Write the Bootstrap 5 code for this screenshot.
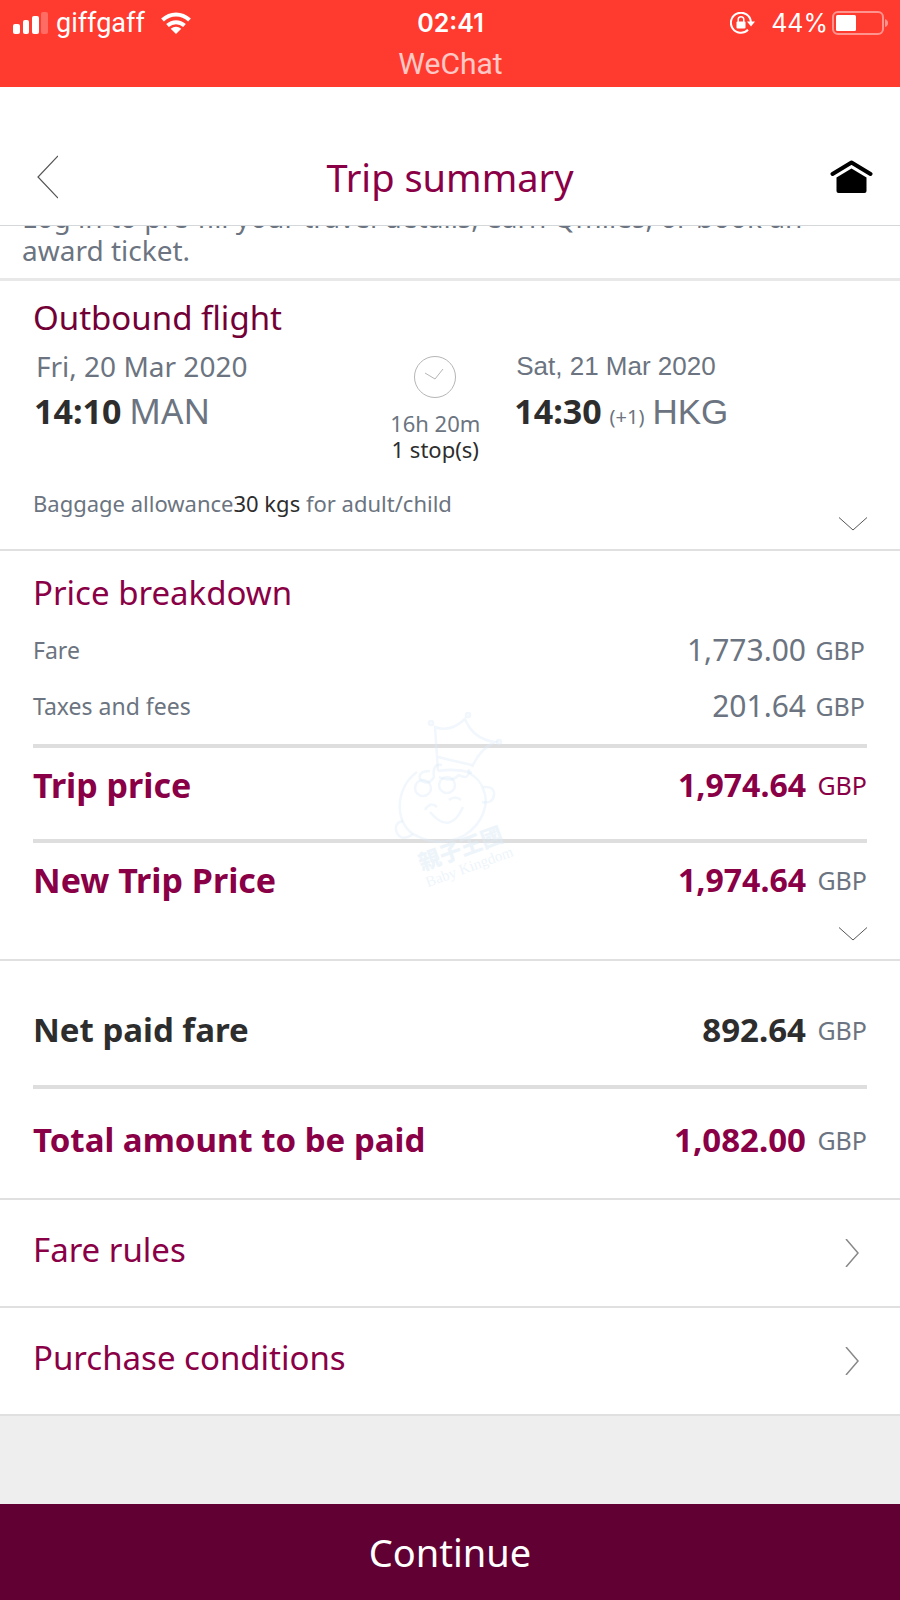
<!DOCTYPE html>
<html lang="en">
<head>
<meta charset="utf-8">
<meta name="viewport" content="width=device-width, initial-scale=1">
<title>Trip summary</title>
<link href="https://cdn.jsdelivr.net/npm/bootstrap@5.3.0/dist/css/bootstrap.min.css" rel="stylesheet">
<style>
  :root { --burgundy: #8a0046; --slate: #6b7480; --ink: #2d2d2d; --hair: #e0e0e0; }
  body { font-family: "Noto Sans", sans-serif; color: var(--slate); font-size: 22px; line-height: 26px; background: #eee; }
  svg { display: block; }
  .ink { color: var(--ink); }
  .burgundy { color: var(--burgundy); }

  .status { background: #ff3b30; color: #fff; font-family: Inter, sans-serif; font-size: 25px; line-height: 40px; min-height: 87px; padding: 3px 12px 0 13px; }
  .status-grid { display: grid; grid-template-columns: 1fr auto 1fr; }
  .carrier { font-family: Roboto, sans-serif; font-size: 27px; }
  .caller { font-family: Roboto, sans-serif; font-size: 30px; line-height: 42px; opacity: .72; }

  .topbar { padding: 41px 27px 0; min-height: 139px; border-bottom: 1px solid #d5d8da; display: grid; grid-template-columns: 1fr auto 1fr; }
  .topbar h1 { font-size: 38px; line-height: 50px; }
  .icon-btn { border: 0; background: none; padding: 0; }
  .back { padding-left: 9px; }

  .promo { height: 55px; overflow: hidden; padding: 0 22px 11px; font-size: 28px; line-height: 33px; border-bottom: 3px solid #e8e8e8; }

  .panel { padding: 0 33px; background: #fff; border-bottom: 2px solid var(--hair); }
  .panel h2 { font-size: 33px; line-height: 46px; }
  .flight { padding-top: 14px; }
  .flight h2 { color: #720036; }
  .legs { display: grid; grid-template-columns: 39% 154px 1fr; margin-top: 5px; }
  .leg-date { font-size: 28px; line-height: 40px; padding-left: 3px; }
  .leg-date.arial { font-size: 26px; }
  .leg-time { font-size: 35px; line-height: 50px; gap: 8px; padding-left: 1px; }
  .leg-time b { font-size: 34px; }
  .leg-end { padding-left: 1px; }
  .arial { font-family: "Liberation Sans", Arial, sans-serif; }
  .plus-day { font-size: 20px; }
  .duration { padding-top: 10px; }
  .duration svg { margin-bottom: 12px; }
  .baggage { margin-top: 21px; min-height: 66px; line-height: 40px; }
  .expand { width: 28px; height: 42px; margin-bottom: 4px; }

  .breakdown { padding-top: 19px; }
  .sums { width: 100%; border-collapse: separate; border-spacing: 0; line-height: 44px; margin-top: 6px; }
  .sums th { font-weight: 400; font-size: 23px; }
  .sums th, .sums td { padding: 6px 0; vertical-align: middle; }
  .sums .amount { font-size: 30px; text-align: right; }
  .sums .unit { width: 61px; padding-right: 2px; font-size: 25px; text-align: right; }
  .sums .strong th { font-size: 34px; font-weight: 700; }
  .sums .strong .amount { font-size: 32px; font-weight: 700; }
  .sums .before-rule > * { padding-bottom: 16px; }
  .sums .ruled > * { border-top: 4px solid #dedede; }
  .sums .strong > * { padding: 15px 0 32px; }
  .sums .last > * { padding-bottom: 11px; }
  .due { margin-top: 0; }
  .due .strong th, .due .strong .amount { font-size: 33px; }
  .due .net > * { padding: 47px 0 33px; }
  .due .total > * { padding: 29px 0 36px; }
  .watermark { top: 158px; left: 43%; width: 130px; }

  .more { padding-right: 41px; min-height: 108px; font-size: 33px; line-height: 44px; }
  .more span { padding-bottom: 6px; }
  .spacer { min-height: 87px; }
  .go { min-height: 96px; background: #610033; color: #fff; border: 0; font-size: 38px; line-height: 50px; }
</style>
</head>
<body class="d-flex flex-column min-vh-100">

<div class="status">
  <div class="status-grid">
    <div class="d-flex align-items-center">
      <svg width="35" height="22" viewBox="0 0 35 22" fill="#fff" aria-hidden="true"><rect y="12" width="7" height="10" rx="2"/><rect x="10" y="8" width="6" height="14" rx="2"/><rect x="19" y="4" width="7" height="18" rx="2"/><rect x="28" width="7" height="22" rx="2" opacity=".25"/></svg>
      <span class="carrier ms-2">giffgaff</span>
      <svg class="ms-3" width="30" height="22" viewBox="0 0 30 22" aria-hidden="true"><g fill="none" stroke="#fff" stroke-width="4"><path d="M1.500 8C9.500 .5 20.500 .5 28.500 8"/><path d="M6.500 13.500C11.500 9 18.500 9 23.500 13.500"/></g><path d="M15 22l-5.300-5.300C13 14 17 14 20.300 16.700z" fill="#fff"/></svg>
    </div>
    <div class="fw-semibold">02:41</div>
    <div class="d-flex align-items-center justify-content-end">
      <svg width="25" height="22" viewBox="0 0 25 22" aria-hidden="true"><path d="M18 17.800A10 10 0 1 1 20.900 10" fill="none" stroke="#fff" stroke-width="2"/><path d="M17 9.500h8l-4 5z" fill="#fff"/><rect x="6.500" y="9.500" width="9" height="7" rx="1" fill="#fff"/><path d="M8.200 10V7.500a2.800 2.800 0 0 1 5.600 0V10" fill="none" stroke="#fff" stroke-width="1.500"/></svg>
      <span class="ms-3">44%</span>
      <svg class="ms-1" width="56" height="24" viewBox="0 0 56 24" aria-hidden="true"><rect x="1" y="1" width="50" height="22" rx="5" fill="none" stroke="#fff" stroke-opacity=".45" stroke-width="2"/><rect x="4" y="4" width="20" height="16" rx="1.500" fill="#fff"/><path d="M53 8q3 1 3 4t-3 4z" fill="#fff" opacity=".45"/></svg>
    </div>
  </div>
  <div class="caller text-center">WeChat</div>
</div>

<header class="topbar bg-white align-items-center">
  <button class="icon-btn back justify-self-start" type="button" aria-label="Back"><svg width="22" height="44" viewBox="0 0 22 44" fill="none" stroke="#555" stroke-width="1.200"><path d="M22 1L2 22l20 21"/></svg></button>
  <h1 class="burgundy fw-normal m-0">Trip summary</h1>
  <button class="icon-btn ms-auto" type="button" aria-label="Home"><svg width="43" height="34" viewBox="0 0 43 34"><path d="M2.500 14L21.500 2.500 40.500 14" fill="none" stroke="#000" stroke-width="4" stroke-linecap="round" stroke-linejoin="round"/><path d="M21.500 8.500L36.500 17.500V31q0 2-2 2h-26q-2 0-2-2V17.500z"/></svg></button>
</header>

<div class="promo bg-white d-flex align-items-end">
  <p class="m-0">Log in to pre-fill your travel details, earn Qmiles, or book an<br>award ticket.</p>
</div>

<main>
  <section class="panel flight">
    <h2 class="fw-normal m-0">Outbound flight</h2>
    <div class="legs">
      <div>
        <div class="leg-date">Fri, 20 Mar 2020</div>
        <div class="leg-time d-flex align-items-baseline"><b class="ink">14:10</b><span>MAN</span></div>
      </div>
      <div class="duration text-center">
        <svg class="mx-auto" width="42" height="42" viewBox="0 0 42 42" fill="none" stroke="#b5b5b5" aria-hidden="true"><circle cx="21" cy="21" r="20.500"/><path d="M11 17l10 6 8-10"/></svg>
        <div>16h 20m</div>
        <div class="ink">1 stop(s)</div>
      </div>
      <div class="leg-end">
        <div class="leg-date arial">Sat, 21 Mar 2020</div>
        <div class="leg-time d-flex align-items-baseline"><b class="ink">14:30</b><span class="plus-day">(+1)</span><span class="arial">HKG</span></div>
      </div>
    </div>
    <div class="baggage d-flex justify-content-between">
      <div>Baggage allowance<span class="ink">30 kgs</span> for adult/child</div>
      <button class="icon-btn expand align-self-end" type="button" aria-label="Show flight details"><svg width="28" height="14" viewBox="0 0 28 14" fill="none" stroke="#555"><path d="M0 .5l14 12.500L28 .5"/></svg></button>
    </div>
  </section>

  <section class="panel breakdown position-relative">
    <h2 class="burgundy fw-normal m-0">Price breakdown</h2>
    <table class="sums">
      <tbody>
        <tr><th scope="row">Fare</th><td class="amount">1,773.00</td><td class="unit">GBP</td></tr>
        <tr class="before-rule"><th scope="row">Taxes and fees</th><td class="amount">201.64</td><td class="unit">GBP</td></tr>
        <tr class="ruled strong burgundy"><th scope="row">Trip price</th><td class="amount">1,974.64</td><td class="unit">GBP</td></tr>
        <tr class="ruled strong last"><th class="burgundy" scope="row">New Trip Price</th><td class="amount burgundy">1,974.64</td><td class="unit">GBP</td></tr>
      </tbody>
    </table>
    <div class="d-flex justify-content-end">
      <button class="icon-btn expand" type="button" aria-label="Show price details"><svg width="28" height="14" viewBox="0 0 28 14" fill="none" stroke="#555"><path d="M0 .5l14 12.500L28 .5"/></svg></button>
    </div>
    <svg class="watermark position-absolute pe-none" viewBox="0 0 130 200" fill="none" stroke="#dcebf7" stroke-opacity=".4" stroke-width="2.500" aria-hidden="true">
      <path d="M51 62L48 18q15 6 30-8 8 20 30 23-15 7-23 25M51 48q16 4 34 8M51 62q18-3 34 2"/>
      <circle cx="44" cy="14" r="2"/><circle cx="81" cy="6" r="2"/><circle cx="112" cy="33" r="2"/>
      <path d="M30 63C6 80 8 118 30 127q24 12 48-1c18-12 25-32 18-46q-3-10-14-16"/>
      <path d="M96 78q12-1 11 8-1 9-12 7M16 112q-10 2-6 12 5 9 16 1"/>
      <circle cx="36" cy="79" r="8"/><circle cx="60" cy="76" r="8"/><path d="M43 62q-12 0-10 8 8 8 14-2-2-14 8-12M52 68q12 6 20-2 10 6 10-6"/>
      <path d="M38 101q5-9 12-3M62 91q6-5 12 0M43 103q20 24 33-5"/>
      <g stroke="none" fill="#dcebf7" fill-opacity=".5" transform="rotate(-20 36 165)">
        <text x="36" y="162" font-size="22" font-weight="900" font-family="'Noto Sans CJK TC', sans-serif">親子王國</text>
        <text x="36" y="179" font-size="15" font-family="'Liberation Serif', serif">Baby Kingdom</text>
      </g>
    </svg>
  </section>

  <section class="panel">
    <table class="sums due">
      <tbody>
        <tr class="strong net"><th class="ink" scope="row">Net paid fare</th><td class="amount ink">892.64</td><td class="unit">GBP</td></tr>
        <tr class="ruled strong total"><th class="burgundy" scope="row">Total amount to be paid</th><td class="amount burgundy">1,082.00</td><td class="unit">GBP</td></tr>
      </tbody>
    </table>
  </section>

  <nav aria-label="Conditions">
    <a href="#fare-rules" class="panel more burgundy text-decoration-none d-flex align-items-center justify-content-between"><span>Fare rules</span><svg width="14" height="28" viewBox="0 0 14 28" fill="none" stroke="#888" stroke-width="1.500"><path d="M1 0l12 14L1 28"/></svg></a>
    <a href="#purchase-conditions" class="panel more burgundy text-decoration-none d-flex align-items-center justify-content-between"><span>Purchase conditions</span><svg width="14" height="28" viewBox="0 0 14 28" fill="none" stroke="#888" stroke-width="1.500"><path d="M1 0l12 14L1 28"/></svg></a>
  </nav>
</main>

<div class="spacer flex-grow-1"></div>
<button class="go w-100" type="button">Continue</button>

<script src="https://cdn.jsdelivr.net/npm/bootstrap@5.3.0/dist/js/bootstrap.bundle.min.js"></script>
</body>
</html>
